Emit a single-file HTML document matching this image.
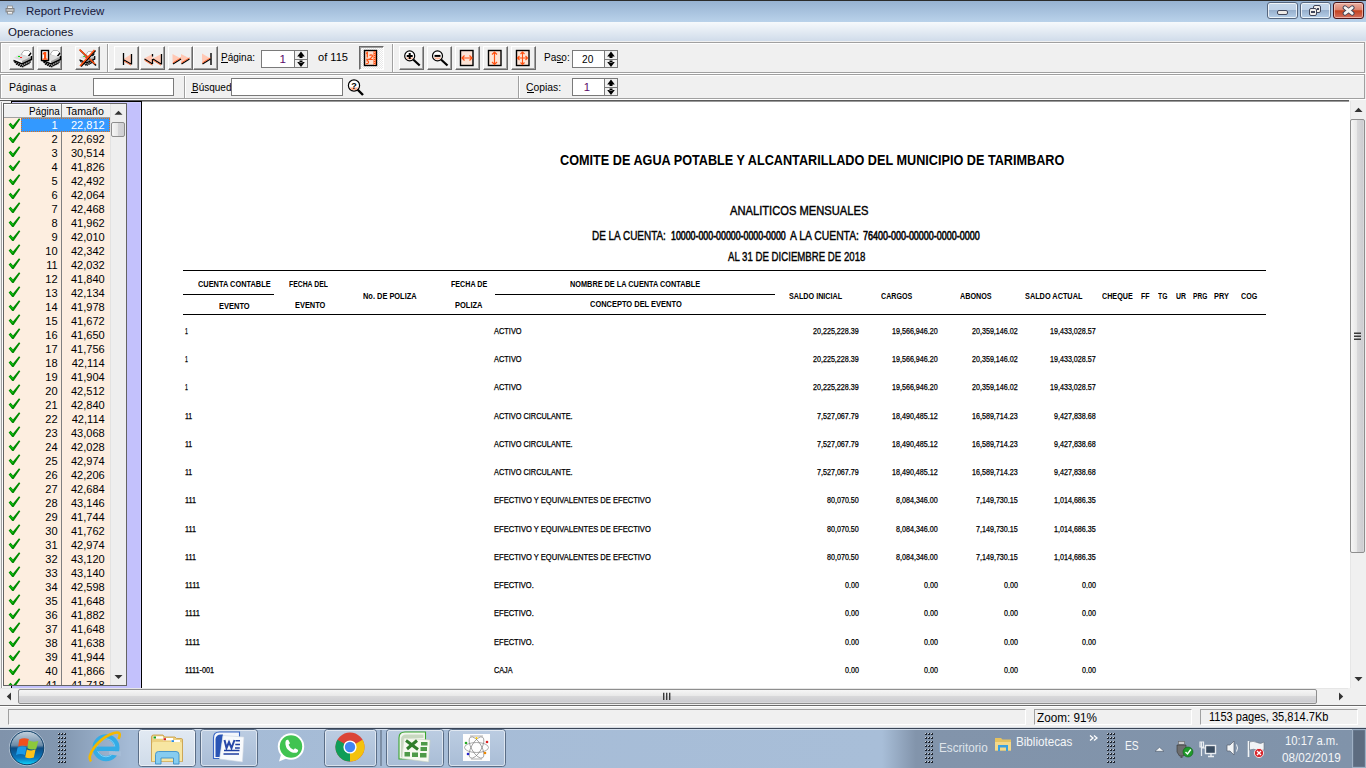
<!DOCTYPE html>
<html><head><meta charset="utf-8"><style>
*{margin:0;padding:0;box-sizing:border-box}
html,body{width:1366px;height:768px;overflow:hidden;background:#f0f0f0;font-family:"Liberation Sans",sans-serif;position:relative}
.a{position:absolute}
.t{position:absolute;white-space:nowrap;line-height:1;transform-origin:0 0}
.btn{position:absolute;top:46px;width:25px;height:24px;background:#f0f0f0;border-top:1px solid #fff;border-left:1px solid #fff;border-right:1px solid #6a6a6a;border-bottom:1px solid #6a6a6a;box-shadow:inset -1px -1px 0 #a0a0a0}
.wb{top:2px;height:17px;border:1px solid #56667e;border-radius:3px;box-shadow:inset 0 0 0 1px rgba(255,255,255,.75);background:linear-gradient(#c4d6ea 0,#bfd2e8 48%,#98b0cd 50%,#b6cfe9 100%)}
.wbc{top:2px;height:17px;border:1px solid #4a1418;border-radius:3px;box-shadow:inset 0 0 0 1px rgba(255,220,210,.6);background:linear-gradient(#eab0a2 0,#dc8470 45%,#c4421f 52%,#d47060 100%)}
.inp{position:absolute;background:#fff;border:1px solid #7a7a7a}
</style></head><body>

<div class="a" style="left:0;top:0;width:1366px;height:1px;background:#2b2b2b"></div>
<div class="a" style="left:0;top:1px;width:1366px;height:21px;background:linear-gradient(#97b2d2,#b9d2ea)"></div>
<div class="t" style="left:26.40px;top:4.75px;font-size:11.63px;font-weight:normal;color:#16163a;transform:scaleX(0.9853);">Report Preview</div>
<div class="a wb" style="left:1267px;width:31px"><div class="a" style="left:9px;top:7px;width:11px;height:5px;background:#eeeae6;border:1px solid #41465a;border-radius:2px"></div></div>
<div class="a wb" style="left:1300px;width:31px"><div class="a" style="left:12px;top:2px;width:8px;height:8px;background:#f2efec;border:1.5px solid #41465a;border-radius:2px"><div class="a" style="left:3px;top:2px;width:2px;height:2px;border:1px solid #41465a"></div></div><div class="a" style="left:8px;top:5px;width:8px;height:8px;background:#f2efec;border:1.5px solid #41465a;border-radius:2px"><div class="a" style="left:1px;top:2px;width:4px;height:2px;border:1px solid #41465a"></div></div></div>
<div class="a wbc" style="left:1333px;width:31px"><svg class="a" style="left:8px;top:2px" width="14" height="12" viewBox="0 0 14 12"><path d="M3 2.7 L10.2 8.3 M10.2 2.7 L3 8.3" stroke="#3e4256" stroke-width="4.6" stroke-linecap="round"/><path d="M3 2.7 L10.2 8.3 M10.2 2.7 L3 8.3" stroke="#f6f4f2" stroke-width="2.8" stroke-linecap="round"/></svg></div>
<svg class="a" style="left:5px;top:5px" width="10" height="10" viewBox="0 0 10 10"><rect x="2.5" y="1" width="5" height="2.5" fill="#f4f4f4" stroke="#8a8a8a" stroke-width="0.8"/><rect x="1" y="3.5" width="8" height="3.5" fill="#bdbdbd" stroke="#7a7a7a" stroke-width="0.8"/><rect x="2.5" y="6.5" width="5" height="2.5" fill="#f4f4f4" stroke="#8a8a8a" stroke-width="0.8"/></svg>
<div class="a" style="left:0;top:22px;width:1366px;height:19px;background:linear-gradient(#f6f9fc,#d0dcea)"></div>
<div class="t" style="left:7.60px;top:25.95px;font-size:11.63px;font-weight:normal;color:#10102a;transform:scaleX(0.9890);">Operaciones</div>
<div class="a" style="left:0;top:41px;width:1366px;height:1px;background:#f0f0f0"></div>
<div class="a" style="left:0;top:42px;width:1365px;height:31px;border:1px solid #a0a0a0;box-shadow:inset 1px 1px 0 #fff;background:#f0f0f0"></div>
<div class="a" style="left:0;top:73px;width:1366px;height:1px;background:#fff"></div>
<div class="btn" style="left:9px"></div>
<div class="btn" style="left:37px"></div>
<div class="btn" style="left:75px"></div>
<div class="btn" style="left:114px"></div>
<div class="btn" style="left:140px"></div>
<div class="btn" style="left:168px"></div>
<div class="btn" style="left:193px"></div>
<div class="btn" style="left:399px"></div>
<div class="btn" style="left:427px"></div>
<div class="btn" style="left:455px"></div>
<div class="btn" style="left:483px"></div>
<div class="btn" style="left:511px"></div>
<div class="btn" style="left:359px;width:25px;border-top:1px solid #6a6a6a;border-left:1px solid #6a6a6a;border-right:1px solid #fff;border-bottom:1px solid #fff;box-shadow:inset 1px 1px 0 #a0a0a0;background-color:#fff;background-image:conic-gradient(#fff 25%,#e8e8e8 0 50%,#fff 0 75%,#e8e8e8 0);background-size:2px 2px"></div>
<div class="a" style="left:107px;top:44px;width:1px;height:28px;background:#a0a0a0"></div>
<div class="a" style="left:108px;top:44px;width:1px;height:28px;background:#fff"></div>
<div class="a" style="left:392px;top:44px;width:1px;height:28px;background:#a0a0a0"></div>
<div class="a" style="left:393px;top:44px;width:1px;height:28px;background:#fff"></div>
<div class="t" style="left:221.00px;top:51.15px;font-size:11.63px;font-weight:normal;color:#000;transform:scaleX(0.8621);">Página:</div>
<div class="a" style="left:221px;top:62px;width:7px;height:1px;background:#000"></div>
<div class="inp" style="left:261px;top:50px;width:47px;height:18px"></div>
<div class="a" style="left:294px;top:50px;width:14px;height:18px;border:1px solid #7a7a7a;background:#f0f0f0"></div><div class="a" style="left:294px;top:59px;width:14px;height:1px;background:#7a7a7a"></div><svg class="a" style="left:294px;top:50px" width="14" height="18"><path d="M3.2 6.5 L7.0 1.5 L10.8 6.5Z M5.5 6 H8.5 V8 H5.5Z M3.2 12 L7.0 17 L10.8 12Z M5.5 10.5 H8.5 V12.5 H5.5Z" fill="#000"/></svg>
<div class="t" style="left:279.53px;top:53.15px;font-size:11.63px;font-weight:normal;color:#5a0a6a;">1</div>
<div class="t" style="left:317.50px;top:51.15px;font-size:11.63px;font-weight:normal;color:#000;transform:scaleX(0.9533);">of 115</div>
<div class="t" style="left:544.40px;top:52.20px;font-size:11.34px;font-weight:normal;color:#000;transform:scaleX(0.8872);">Paso:</div>
<div class="a" style="left:557px;top:62px;width:6px;height:1px;background:#000"></div>
<div class="inp" style="left:572px;top:50px;width:46px;height:18px"></div>
<div class="a" style="left:604px;top:50px;width:14px;height:18px;border:1px solid #7a7a7a;background:#f0f0f0"></div><div class="a" style="left:604px;top:59px;width:14px;height:1px;background:#7a7a7a"></div><svg class="a" style="left:604px;top:50px" width="14" height="18"><path d="M3.2 6.5 L7.0 1.5 L10.8 6.5Z M5.5 6 H8.5 V8 H5.5Z M3.2 12 L7.0 17 L10.8 12Z M5.5 10.5 H8.5 V12.5 H5.5Z" fill="#000"/></svg>
<div class="t" style="left:582.00px;top:53.15px;font-size:11.63px;font-weight:normal;color:#000;transform:scaleX(0.8734);">20</div>
<svg class="a" style="left:0;top:0" width="1366" height="100"><g transform="translate(13,50)">
<path d="M8 4.5 L11 0.5 L15.5 0.5 L18 3 L14.5 7 Z" fill="#fff" stroke="#9a9a9a" stroke-width="0.8"/>
<path d="M18 3 L14.5 7.5" stroke="#000" stroke-width="1.3"/>
<path d="M0.5 8 L6 4.5 L18.5 6.5 L9 11 Z" fill="#dcdcdc"/>
<path d="M0.5 8 L9 11 L9 14 L0.5 11 Z" fill="#f2f2f2"/>
<path d="M9 11 L18.5 6.5 L18.5 10 L9 14 Z" fill="#a4a4a4"/>
<path d="M0.5 10.5 L9 14 L18.5 9.5 L18.5 6" fill="none" stroke="#000" stroke-width="1.4"/>
<path d="M1.5 12.2 L9 15.6 L18 11.6" fill="none" stroke="#000" stroke-width="1.4" stroke-dasharray="1.6 0.7"/>
<path d="M3 13.8 L9 17 L16.5 13.3" fill="none" stroke="#000" stroke-width="1.4" stroke-dasharray="1.6 0.7"/>
<rect x="5" y="6" width="2" height="1" fill="#00e000"/><rect x="7" y="7" width="2" height="1" fill="#ff2020"/>
</g><g transform="translate(42,50)">
<path d="M8 4.5 L11 0.5 L15.5 0.5 L18 3 L14.5 7 Z" fill="#fff" stroke="#9a9a9a" stroke-width="0.8"/>
<path d="M18 3 L14.5 7.5" stroke="#000" stroke-width="1.3"/>
<path d="M0.5 8 L6 4.5 L18.5 6.5 L9 11 Z" fill="#dcdcdc"/>
<path d="M0.5 8 L9 11 L9 14 L0.5 11 Z" fill="#f2f2f2"/>
<path d="M9 11 L18.5 6.5 L18.5 10 L9 14 Z" fill="#a4a4a4"/>
<path d="M0.5 10.5 L9 14 L18.5 9.5 L18.5 6" fill="none" stroke="#000" stroke-width="1.4"/>
<path d="M1.5 12.2 L9 15.6 L18 11.6" fill="none" stroke="#000" stroke-width="1.4" stroke-dasharray="1.6 0.7"/>
<path d="M3 13.8 L9 17 L16.5 13.3" fill="none" stroke="#000" stroke-width="1.4" stroke-dasharray="1.6 0.7"/>

</g><rect x="41.5" y="50.5" width="7" height="10" fill="#fff" stroke="#000" stroke-width="1.4"/><path d="M44 52 H46.3 V58.5 H47.5 V59.8 H42.5 V58.5 H44 V54.2 L42.8 54.8 V53.3Z" fill="#ff5010"/><g transform="translate(79,51) scale(0.85)"><g transform="translate(0,0)">
<path d="M8 4.5 L11 0.5 L15.5 0.5 L18 3 L14.5 7 Z" fill="#fff" stroke="#9a9a9a" stroke-width="0.8"/>
<path d="M18 3 L14.5 7.5" stroke="#000" stroke-width="1.3"/>
<path d="M0.5 8 L6 4.5 L18.5 6.5 L9 11 Z" fill="#dcdcdc"/>
<path d="M0.5 8 L9 11 L9 14 L0.5 11 Z" fill="#f2f2f2"/>
<path d="M9 11 L18.5 6.5 L18.5 10 L9 14 Z" fill="#a4a4a4"/>
<path d="M0.5 10.5 L9 14 L18.5 9.5 L18.5 6" fill="none" stroke="#000" stroke-width="1.4"/>
<path d="M1.5 12.2 L9 15.6 L18 11.6" fill="none" stroke="#000" stroke-width="1.4" stroke-dasharray="1.6 0.7"/>
<path d="M3 13.8 L9 17 L16.5 13.3" fill="none" stroke="#000" stroke-width="1.4" stroke-dasharray="1.6 0.7"/>
<rect x="5" y="6" width="2" height="1" fill="#00e000"/><rect x="7" y="7" width="2" height="1" fill="#ff2020"/>
</g></g><path d="M80 50 L96 65.5" stroke="#000" stroke-width="1.6"/><path d="M79.5 49.5 L95 64" stroke="#ff5010" stroke-width="1.6"/><path d="M95.5 50.5 L81 66.5" stroke="#000" stroke-width="1.6"/><path d="M94.5 50 L80 66" stroke="#ff5010" stroke-width="1.6"/><path d="M123.5 59 L131.5 54 L131.5 64 Z" fill="#ffc8b4"/><path d="M123.5 53 V65 M131.5 54 V64.5" stroke="#000" stroke-width="1.3"/><path d="M124 60 L131 64" stroke="#000" stroke-width="1.3"/><path d="M124 61.2 L131 65.2" stroke="#ff5010" stroke-width="0.8"/><path d="M144 58.5 L152.5 54 L152.5 64 Z M152.5 58.5 L161.5 54 L161.5 64 Z" fill="#ffc8b4"/><path d="M161.5 54 V64.5 M152.5 54 V56.5 M152.5 59 V64" stroke="#000" stroke-width="1.3"/><path d="M144.5 59 L152.5 64 M153 59 L161 64" stroke="#000" stroke-width="1.3"/><path d="M144.5 60.2 L152.5 65.2 M153 60.2 L161 65.2" stroke="#ff5010" stroke-width="0.8"/><path d="M172.5 54 L181 58.5 L172.5 64 Z M181 54 L190 58.5 L181 64 Z" fill="#ffc8b4"/><path d="M173 64 L181 59 M181.5 64 L189.5 59" stroke="#000" stroke-width="1.3"/><path d="M173 62.8 L181 57.8 M181.5 62.8 L189.5 57.8" stroke="#ff5010" stroke-width="0.8"/><path d="M202 53.5 L210.5 58.5 L202 64 Z" fill="#ffc8b4"/><path d="M211 53 V65" stroke="#000" stroke-width="1.4"/><path d="M202.5 64 L210.5 59" stroke="#000" stroke-width="1.3"/><path d="M202.5 62.8 L210.5 57.8" stroke="#ff5010" stroke-width="0.8"/><rect x="364.5" y="50.5" width="12" height="15" fill="#fde0d0" stroke="#000" stroke-width="1.4"/><rect x="373.5" y="51.2" width="2.3" height="13.6" fill="#ff5010"/><path d="M374.6 52 V65" stroke="#ffd0b8" stroke-width="0.8" stroke-dasharray="1 1"/><path d="M366 53.5 L367.3 52.5 V57.5" fill="none" stroke="#ff5010" stroke-width="1.3"/><path d="M369.5 55.5 Q371 54.3 372.3 55.3 Q373 56.5 371 58 L369.5 59.5 H372.8" fill="none" stroke="#ff5010" stroke-width="1.2"/><path d="M366 59.3 H368.3 L367 60.8 Q368.8 61 368.5 62.6 Q367.8 64.2 365.8 63.6" fill="none" stroke="#ff5010" stroke-width="1.1"/><path d="M413.2 59.5 L419.7 65.5" stroke="#000" stroke-width="2.2"/><circle cx="409.7" cy="55.9" r="5" fill="#fff" stroke="#000" stroke-width="1.2"/><path d="M405.7 57.5 A5 5 0 0 0 413.7 57.5" fill="#ffb090"/><path d="M406.7 55.9 H412.7 M409.7 52.9 V58.9" stroke="#000" stroke-width="2"/><path d="M441.0 59.5 L447.5 65.5" stroke="#000" stroke-width="2.2"/><circle cx="437.5" cy="55.9" r="5" fill="#fff" stroke="#000" stroke-width="1.2"/><path d="M433.5 57.5 A5 5 0 0 0 441.5 57.5" fill="#ffb090"/><path d="M434.5 55.9 H440.5" stroke="#000" stroke-width="2"/><rect x="460.5" y="50.5" width="12.5" height="15" fill="#fde4d6" stroke="#000" stroke-width="1.4"/><rect x="488.5" y="50.5" width="12.5" height="15" fill="#fde4d6" stroke="#000" stroke-width="1.4"/><rect x="516.5" y="50.5" width="12.5" height="15" fill="#fde4d6" stroke="#000" stroke-width="1.4"/><path d="M462 58 H472 M464.5 55.5 L462 58 L464.5 60.5 M469.5 55.5 L472 58 L469.5 60.5" stroke="#ff5010" stroke-width="1.2" fill="none"/><path d="M494.5 52 V64.5 M492 54.5 L494.5 52 L497 54.5 M492 62 L494.5 64.5 L497 62" stroke="#ff5010" stroke-width="1.2" fill="none"/><path d="M522.5 52 V64.5 M517.5 58 H527.5 M520.5 54 L522.5 52 L524.5 54 M520.5 62.5 L522.5 64.5 L524.5 62.5 M519.5 56 L517.5 58 L519.5 60 M525.5 56 L527.5 58 L525.5 60" stroke="#ff5010" stroke-width="1.1" fill="none"/></svg>
<div class="a" style="left:0;top:74px;width:1365px;height:25px;border:1px solid #a0a0a0;box-shadow:inset 1px 1px 0 #fff;background:#f0f0f0"></div>
<div class="a" style="left:0;top:99px;width:1366px;height:1px;background:#fff"></div>
<div class="t" style="left:9.00px;top:82.27px;font-size:10.90px;font-weight:normal;color:#000;transform:scaleX(0.9700);">Páginas a</div>
<div class="inp" style="left:93px;top:78px;width:81px;height:18px"></div>
<div class="a" style="left:184px;top:76px;width:1px;height:22px;background:#a0a0a0"></div>
<div class="a" style="left:185px;top:76px;width:1px;height:22px;background:#fff"></div>
<div class="a" style="left:518px;top:76px;width:1px;height:22px;background:#a0a0a0"></div>
<div class="a" style="left:519px;top:76px;width:1px;height:22px;background:#fff"></div>
<div class="t" style="left:191.50px;top:82.27px;font-size:10.90px;font-weight:normal;color:#000;transform:scaleX(0.9186);">Búsqued</div>
<div class="a" style="left:191px;top:92px;width:7px;height:1px;background:#000"></div>
<div class="inp" style="left:231px;top:78px;width:112px;height:18px"></div>
<div class="t" style="left:526.30px;top:82.27px;font-size:10.90px;font-weight:normal;color:#000;transform:scaleX(0.9503);">Copias:</div>
<div class="a" style="left:527px;top:92px;width:7px;height:1px;background:#000"></div>
<div class="inp" style="left:572px;top:78px;width:46px;height:18px"></div>
<div class="a" style="left:604px;top:78px;width:14px;height:18px;border:1px solid #7a7a7a;background:#f0f0f0"></div><div class="a" style="left:604px;top:87px;width:14px;height:1px;background:#7a7a7a"></div><svg class="a" style="left:604px;top:78px" width="14" height="18"><path d="M3.2 6.5 L7.0 1.5 L10.8 6.5Z M5.5 6 H8.5 V8 H5.5Z M3.2 12 L7.0 17 L10.8 12Z M5.5 10.5 H8.5 V12.5 H5.5Z" fill="#000"/></svg>
<div class="t" style="left:583.69px;top:81.60px;font-size:11.34px;font-weight:normal;color:#5a0a6a;">1</div>
<svg class="a" style="left:347px;top:78px" width="18" height="18"><path d="M10 11 L16 17" stroke="#000" stroke-width="2.4"/><circle cx="7" cy="7.5" r="5.6" fill="#fff" stroke="#000" stroke-width="1.2"/><path d="M2.5 9.5 A5 5 0 0 0 11.5 9.5" fill="#ffb090"/><text x="7" y="11" font-size="9" font-weight="bold" text-anchor="middle" fill="#000" font-family="Liberation Sans">?</text></svg>
<div class="a" style="left:0;top:100px;width:1349px;height:1px;background:#5a5a5a"></div>
<div class="a" style="left:142px;top:101px;width:1207px;height:1px;background:#9a9a9a"></div>
<div class="a" style="left:1px;top:102px;width:1px;height:586px;background:#a0a0a0"></div>
<div class="a" style="left:2px;top:102px;width:1px;height:586px;background:#fff"></div>
<div class="a" style="left:11px;top:101px;width:131px;height:1px;background:#000"></div>
<div class="a" style="left:142px;top:102px;width:1208px;height:586px;background:#fff"></div>
<div class="a" style="left:12px;top:102px;width:129px;height:586px;background:#c3c1fc;border-top:1px solid #cfcdfd;border-right:1px solid #cfcdfd"></div>
<div class="a" style="left:141px;top:101px;width:1px;height:587px;background:#000"></div>
<div class="a" style="left:11px;top:101px;width:1px;height:587px;background:#000"></div>
<div class="a" style="left:3px;top:103px;width:124px;height:583px;background:#fdeee0;border:1px solid #646464;overflow:hidden">
<div class="a" style="left:0;top:0;width:106px;height:14px;background:#f0f0f0;border-top:1px solid #fff;border-bottom:1px solid #a0a0a0"></div>
<div class="a" style="left:57px;top:0;width:1px;height:600px;background:#808080"></div>
<div class="a" style="left:106px;top:0;width:16px;height:581px;background:#eeeeee;border-left:1px solid #e2e2e2"></div>
<div class="a" style="left:17px;top:14px;width:89px;height:14px;background:#3399ff"></div>
<div class="a" style="left:17px;top:14px;width:89px;height:14px;border:1px dotted #e07018"></div>
<div class="a" style="left:107px;top:18px;width:14px;height:15px;border:1px solid #8e8e8e;border-radius:2px;background:linear-gradient(90deg,#f6f6f6,#e6e6e6 50%,#d4d4d6 52%,#cfcfd2)"></div>
</div>
<svg class="a" style="left:0;top:100px" width="130" height="585"><path d="M114.5 14.8 L118.5 10.8 L122.5 14.8Z" fill="#333"/><path d="M114.5 575 L118.5 579 L122.5 575Z" fill="#333"/>
<path d="M8.6 24.6 L10.6 22.8 L13 25.4 L19 18.2 L20.3 19.2 L13.6 29 L12.2 29Z" fill="#008c00"/><path d="M10 24.2 L12.8 27" stroke="#10e010" stroke-width="1"/>
<path d="M8.6 38.6 L10.6 36.8 L13 39.4 L19 32.2 L20.3 33.2 L13.6 43 L12.2 43Z" fill="#008c00"/><path d="M10 38.2 L12.8 41" stroke="#10e010" stroke-width="1"/>
<path d="M8.6 52.6 L10.6 50.8 L13 53.4 L19 46.2 L20.3 47.2 L13.6 57 L12.2 57Z" fill="#008c00"/><path d="M10 52.2 L12.8 55" stroke="#10e010" stroke-width="1"/>
<path d="M8.6 66.6 L10.6 64.8 L13 67.4 L19 60.2 L20.3 61.2 L13.6 71 L12.2 71Z" fill="#008c00"/><path d="M10 66.2 L12.8 69" stroke="#10e010" stroke-width="1"/>
<path d="M8.6 80.6 L10.6 78.8 L13 81.4 L19 74.2 L20.3 75.2 L13.6 85 L12.2 85Z" fill="#008c00"/><path d="M10 80.2 L12.8 83" stroke="#10e010" stroke-width="1"/>
<path d="M8.6 94.6 L10.6 92.8 L13 95.4 L19 88.2 L20.3 89.2 L13.6 99 L12.2 99Z" fill="#008c00"/><path d="M10 94.2 L12.8 97" stroke="#10e010" stroke-width="1"/>
<path d="M8.6 108.6 L10.6 106.8 L13 109.4 L19 102.2 L20.3 103.2 L13.6 113 L12.2 113Z" fill="#008c00"/><path d="M10 108.2 L12.8 111" stroke="#10e010" stroke-width="1"/>
<path d="M8.6 122.6 L10.6 120.8 L13 123.4 L19 116.2 L20.3 117.2 L13.6 127 L12.2 127Z" fill="#008c00"/><path d="M10 122.2 L12.8 125" stroke="#10e010" stroke-width="1"/>
<path d="M8.6 136.6 L10.6 134.8 L13 137.4 L19 130.2 L20.3 131.2 L13.6 141 L12.2 141Z" fill="#008c00"/><path d="M10 136.2 L12.8 139" stroke="#10e010" stroke-width="1"/>
<path d="M8.6 150.6 L10.6 148.8 L13 151.4 L19 144.2 L20.3 145.2 L13.6 155 L12.2 155Z" fill="#008c00"/><path d="M10 150.2 L12.8 153" stroke="#10e010" stroke-width="1"/>
<path d="M8.6 164.6 L10.6 162.8 L13 165.4 L19 158.2 L20.3 159.2 L13.6 169 L12.2 169Z" fill="#008c00"/><path d="M10 164.2 L12.8 167" stroke="#10e010" stroke-width="1"/>
<path d="M8.6 178.6 L10.6 176.8 L13 179.4 L19 172.2 L20.3 173.2 L13.6 183 L12.2 183Z" fill="#008c00"/><path d="M10 178.2 L12.8 181" stroke="#10e010" stroke-width="1"/>
<path d="M8.6 192.6 L10.6 190.8 L13 193.4 L19 186.2 L20.3 187.2 L13.6 197 L12.2 197Z" fill="#008c00"/><path d="M10 192.2 L12.8 195" stroke="#10e010" stroke-width="1"/>
<path d="M8.6 206.6 L10.6 204.8 L13 207.4 L19 200.2 L20.3 201.2 L13.6 211 L12.2 211Z" fill="#008c00"/><path d="M10 206.2 L12.8 209" stroke="#10e010" stroke-width="1"/>
<path d="M8.6 220.6 L10.6 218.8 L13 221.4 L19 214.2 L20.3 215.2 L13.6 225 L12.2 225Z" fill="#008c00"/><path d="M10 220.2 L12.8 223" stroke="#10e010" stroke-width="1"/>
<path d="M8.6 234.6 L10.6 232.8 L13 235.4 L19 228.2 L20.3 229.2 L13.6 239 L12.2 239Z" fill="#008c00"/><path d="M10 234.2 L12.8 237" stroke="#10e010" stroke-width="1"/>
<path d="M8.6 248.6 L10.6 246.8 L13 249.4 L19 242.2 L20.3 243.2 L13.6 253 L12.2 253Z" fill="#008c00"/><path d="M10 248.2 L12.8 251" stroke="#10e010" stroke-width="1"/>
<path d="M8.6 262.6 L10.6 260.8 L13 263.4 L19 256.2 L20.3 257.2 L13.6 267 L12.2 267Z" fill="#008c00"/><path d="M10 262.2 L12.8 265" stroke="#10e010" stroke-width="1"/>
<path d="M8.6 276.6 L10.6 274.8 L13 277.4 L19 270.2 L20.3 271.2 L13.6 281 L12.2 281Z" fill="#008c00"/><path d="M10 276.2 L12.8 279" stroke="#10e010" stroke-width="1"/>
<path d="M8.6 290.6 L10.6 288.8 L13 291.4 L19 284.2 L20.3 285.2 L13.6 295 L12.2 295Z" fill="#008c00"/><path d="M10 290.2 L12.8 293" stroke="#10e010" stroke-width="1"/>
<path d="M8.6 304.6 L10.6 302.8 L13 305.4 L19 298.2 L20.3 299.2 L13.6 309 L12.2 309Z" fill="#008c00"/><path d="M10 304.2 L12.8 307" stroke="#10e010" stroke-width="1"/>
<path d="M8.6 318.6 L10.6 316.8 L13 319.4 L19 312.2 L20.3 313.2 L13.6 323 L12.2 323Z" fill="#008c00"/><path d="M10 318.2 L12.8 321" stroke="#10e010" stroke-width="1"/>
<path d="M8.6 332.6 L10.6 330.8 L13 333.4 L19 326.2 L20.3 327.2 L13.6 337 L12.2 337Z" fill="#008c00"/><path d="M10 332.2 L12.8 335" stroke="#10e010" stroke-width="1"/>
<path d="M8.6 346.6 L10.6 344.8 L13 347.4 L19 340.2 L20.3 341.2 L13.6 351 L12.2 351Z" fill="#008c00"/><path d="M10 346.2 L12.8 349" stroke="#10e010" stroke-width="1"/>
<path d="M8.6 360.6 L10.6 358.8 L13 361.4 L19 354.2 L20.3 355.2 L13.6 365 L12.2 365Z" fill="#008c00"/><path d="M10 360.2 L12.8 363" stroke="#10e010" stroke-width="1"/>
<path d="M8.6 374.6 L10.6 372.8 L13 375.4 L19 368.2 L20.3 369.2 L13.6 379 L12.2 379Z" fill="#008c00"/><path d="M10 374.2 L12.8 377" stroke="#10e010" stroke-width="1"/>
<path d="M8.6 388.6 L10.6 386.8 L13 389.4 L19 382.2 L20.3 383.2 L13.6 393 L12.2 393Z" fill="#008c00"/><path d="M10 388.2 L12.8 391" stroke="#10e010" stroke-width="1"/>
<path d="M8.6 402.6 L10.6 400.8 L13 403.4 L19 396.2 L20.3 397.2 L13.6 407 L12.2 407Z" fill="#008c00"/><path d="M10 402.2 L12.8 405" stroke="#10e010" stroke-width="1"/>
<path d="M8.6 416.6 L10.6 414.8 L13 417.4 L19 410.2 L20.3 411.2 L13.6 421 L12.2 421Z" fill="#008c00"/><path d="M10 416.2 L12.8 419" stroke="#10e010" stroke-width="1"/>
<path d="M8.6 430.6 L10.6 428.8 L13 431.4 L19 424.2 L20.3 425.2 L13.6 435 L12.2 435Z" fill="#008c00"/><path d="M10 430.2 L12.8 433" stroke="#10e010" stroke-width="1"/>
<path d="M8.6 444.6 L10.6 442.8 L13 445.4 L19 438.2 L20.3 439.2 L13.6 449 L12.2 449Z" fill="#008c00"/><path d="M10 444.2 L12.8 447" stroke="#10e010" stroke-width="1"/>
<path d="M8.6 458.6 L10.6 456.8 L13 459.4 L19 452.2 L20.3 453.2 L13.6 463 L12.2 463Z" fill="#008c00"/><path d="M10 458.2 L12.8 461" stroke="#10e010" stroke-width="1"/>
<path d="M8.6 472.6 L10.6 470.8 L13 473.4 L19 466.2 L20.3 467.2 L13.6 477 L12.2 477Z" fill="#008c00"/><path d="M10 472.2 L12.8 475" stroke="#10e010" stroke-width="1"/>
<path d="M8.6 486.6 L10.6 484.8 L13 487.4 L19 480.2 L20.3 481.2 L13.6 491 L12.2 491Z" fill="#008c00"/><path d="M10 486.2 L12.8 489" stroke="#10e010" stroke-width="1"/>
<path d="M8.6 500.6 L10.6 498.8 L13 501.4 L19 494.2 L20.3 495.2 L13.6 505 L12.2 505Z" fill="#008c00"/><path d="M10 500.2 L12.8 503" stroke="#10e010" stroke-width="1"/>
<path d="M8.6 514.6 L10.6 512.8 L13 515.4 L19 508.2 L20.3 509.2 L13.6 519 L12.2 519Z" fill="#008c00"/><path d="M10 514.2 L12.8 517" stroke="#10e010" stroke-width="1"/>
<path d="M8.6 528.6 L10.6 526.8 L13 529.4 L19 522.2 L20.3 523.2 L13.6 533 L12.2 533Z" fill="#008c00"/><path d="M10 528.2 L12.8 531" stroke="#10e010" stroke-width="1"/>
<path d="M8.6 542.6 L10.6 540.8 L13 543.4 L19 536.2 L20.3 537.2 L13.6 547 L12.2 547Z" fill="#008c00"/><path d="M10 542.2 L12.8 545" stroke="#10e010" stroke-width="1"/>
<path d="M8.6 556.6 L10.6 554.8 L13 557.4 L19 550.2 L20.3 551.2 L13.6 561 L12.2 561Z" fill="#008c00"/><path d="M10 556.2 L12.8 559" stroke="#10e010" stroke-width="1"/>
<path d="M8.6 570.6 L10.6 568.8 L13 571.4 L19 564.2 L20.3 565.2 L13.6 575 L12.2 575Z" fill="#008c00"/><path d="M10 570.2 L12.8 573" stroke="#10e010" stroke-width="1"/>
<path d="M8.6 584.6 L10.6 582.8 L13 585.4 L19 578.2 L20.3 579.2 L13.6 589 L12.2 589Z" fill="#008c00"/><path d="M10 584.2 L12.8 587" stroke="#10e010" stroke-width="1"/>
<rect x="0" y="586" width="130" height="4" fill="none"/></svg>
<div class="a" style="left:4px;top:103px;width:106px;height:582px;overflow:hidden">
<div class="t" style="left:24.50px;top:3.29px;font-size:10.76px;font-weight:normal;color:#000;transform:scaleX(0.9168);">Página</div>
<div class="t" style="left:61.70px;top:3.29px;font-size:10.76px;font-weight:normal;color:#000;transform:scaleX(0.9882);">Tamaño</div>
<div class="t" style="left:47.44px;top:16.55px;font-size:11.05px;font-weight:normal;color:#fff;">1</div>
<div class="t" style="left:66.90px;top:16.55px;font-size:11.05px;font-weight:normal;color:#fff;">22,812</div>
<div class="t" style="left:47.44px;top:30.55px;font-size:11.05px;font-weight:normal;color:#000;">2</div>
<div class="t" style="left:66.90px;top:30.55px;font-size:11.05px;font-weight:normal;color:#000;">22,692</div>
<div class="t" style="left:47.44px;top:44.55px;font-size:11.05px;font-weight:normal;color:#000;">3</div>
<div class="t" style="left:66.90px;top:44.55px;font-size:11.05px;font-weight:normal;color:#000;">30,514</div>
<div class="t" style="left:47.44px;top:58.55px;font-size:11.05px;font-weight:normal;color:#000;">4</div>
<div class="t" style="left:66.90px;top:58.55px;font-size:11.05px;font-weight:normal;color:#000;">41,826</div>
<div class="t" style="left:47.44px;top:72.55px;font-size:11.05px;font-weight:normal;color:#000;">5</div>
<div class="t" style="left:66.90px;top:72.55px;font-size:11.05px;font-weight:normal;color:#000;">42,492</div>
<div class="t" style="left:47.44px;top:86.55px;font-size:11.05px;font-weight:normal;color:#000;">6</div>
<div class="t" style="left:66.90px;top:86.55px;font-size:11.05px;font-weight:normal;color:#000;">42,064</div>
<div class="t" style="left:47.44px;top:100.55px;font-size:11.05px;font-weight:normal;color:#000;">7</div>
<div class="t" style="left:66.90px;top:100.55px;font-size:11.05px;font-weight:normal;color:#000;">42,468</div>
<div class="t" style="left:47.44px;top:114.55px;font-size:11.05px;font-weight:normal;color:#000;">8</div>
<div class="t" style="left:66.90px;top:114.55px;font-size:11.05px;font-weight:normal;color:#000;">41,962</div>
<div class="t" style="left:47.44px;top:128.55px;font-size:11.05px;font-weight:normal;color:#000;">9</div>
<div class="t" style="left:66.90px;top:128.55px;font-size:11.05px;font-weight:normal;color:#000;">42,010</div>
<div class="t" style="left:41.30px;top:142.55px;font-size:11.05px;font-weight:normal;color:#000;">10</div>
<div class="t" style="left:66.90px;top:142.55px;font-size:11.05px;font-weight:normal;color:#000;">42,342</div>
<div class="t" style="left:42.13px;top:156.55px;font-size:11.05px;font-weight:normal;color:#000;">11</div>
<div class="t" style="left:66.90px;top:156.55px;font-size:11.05px;font-weight:normal;color:#000;">42,032</div>
<div class="t" style="left:41.30px;top:170.55px;font-size:11.05px;font-weight:normal;color:#000;">12</div>
<div class="t" style="left:66.90px;top:170.55px;font-size:11.05px;font-weight:normal;color:#000;">41,840</div>
<div class="t" style="left:41.30px;top:184.55px;font-size:11.05px;font-weight:normal;color:#000;">13</div>
<div class="t" style="left:66.90px;top:184.55px;font-size:11.05px;font-weight:normal;color:#000;">42,134</div>
<div class="t" style="left:41.30px;top:198.55px;font-size:11.05px;font-weight:normal;color:#000;">14</div>
<div class="t" style="left:66.90px;top:198.55px;font-size:11.05px;font-weight:normal;color:#000;">41,978</div>
<div class="t" style="left:41.30px;top:212.55px;font-size:11.05px;font-weight:normal;color:#000;">15</div>
<div class="t" style="left:66.90px;top:212.55px;font-size:11.05px;font-weight:normal;color:#000;">41,672</div>
<div class="t" style="left:41.30px;top:226.55px;font-size:11.05px;font-weight:normal;color:#000;">16</div>
<div class="t" style="left:66.90px;top:226.55px;font-size:11.05px;font-weight:normal;color:#000;">41,650</div>
<div class="t" style="left:41.30px;top:240.55px;font-size:11.05px;font-weight:normal;color:#000;">17</div>
<div class="t" style="left:66.90px;top:240.55px;font-size:11.05px;font-weight:normal;color:#000;">41,756</div>
<div class="t" style="left:41.30px;top:254.55px;font-size:11.05px;font-weight:normal;color:#000;">18</div>
<div class="t" style="left:67.73px;top:254.55px;font-size:11.05px;font-weight:normal;color:#000;">42,114</div>
<div class="t" style="left:41.30px;top:268.55px;font-size:11.05px;font-weight:normal;color:#000;">19</div>
<div class="t" style="left:66.90px;top:268.55px;font-size:11.05px;font-weight:normal;color:#000;">41,904</div>
<div class="t" style="left:41.30px;top:282.55px;font-size:11.05px;font-weight:normal;color:#000;">20</div>
<div class="t" style="left:66.90px;top:282.55px;font-size:11.05px;font-weight:normal;color:#000;">42,512</div>
<div class="t" style="left:41.30px;top:296.55px;font-size:11.05px;font-weight:normal;color:#000;">21</div>
<div class="t" style="left:66.90px;top:296.55px;font-size:11.05px;font-weight:normal;color:#000;">42,840</div>
<div class="t" style="left:41.30px;top:310.55px;font-size:11.05px;font-weight:normal;color:#000;">22</div>
<div class="t" style="left:67.73px;top:310.55px;font-size:11.05px;font-weight:normal;color:#000;">42,114</div>
<div class="t" style="left:41.30px;top:324.55px;font-size:11.05px;font-weight:normal;color:#000;">23</div>
<div class="t" style="left:66.90px;top:324.55px;font-size:11.05px;font-weight:normal;color:#000;">43,068</div>
<div class="t" style="left:41.30px;top:338.55px;font-size:11.05px;font-weight:normal;color:#000;">24</div>
<div class="t" style="left:66.90px;top:338.55px;font-size:11.05px;font-weight:normal;color:#000;">42,028</div>
<div class="t" style="left:41.30px;top:352.55px;font-size:11.05px;font-weight:normal;color:#000;">25</div>
<div class="t" style="left:66.90px;top:352.55px;font-size:11.05px;font-weight:normal;color:#000;">42,974</div>
<div class="t" style="left:41.30px;top:366.55px;font-size:11.05px;font-weight:normal;color:#000;">26</div>
<div class="t" style="left:66.90px;top:366.55px;font-size:11.05px;font-weight:normal;color:#000;">42,206</div>
<div class="t" style="left:41.30px;top:380.55px;font-size:11.05px;font-weight:normal;color:#000;">27</div>
<div class="t" style="left:66.90px;top:380.55px;font-size:11.05px;font-weight:normal;color:#000;">42,684</div>
<div class="t" style="left:41.30px;top:394.55px;font-size:11.05px;font-weight:normal;color:#000;">28</div>
<div class="t" style="left:66.90px;top:394.55px;font-size:11.05px;font-weight:normal;color:#000;">43,146</div>
<div class="t" style="left:41.30px;top:408.55px;font-size:11.05px;font-weight:normal;color:#000;">29</div>
<div class="t" style="left:66.90px;top:408.55px;font-size:11.05px;font-weight:normal;color:#000;">41,744</div>
<div class="t" style="left:41.30px;top:422.55px;font-size:11.05px;font-weight:normal;color:#000;">30</div>
<div class="t" style="left:66.90px;top:422.55px;font-size:11.05px;font-weight:normal;color:#000;">41,762</div>
<div class="t" style="left:41.30px;top:436.55px;font-size:11.05px;font-weight:normal;color:#000;">31</div>
<div class="t" style="left:66.90px;top:436.55px;font-size:11.05px;font-weight:normal;color:#000;">42,974</div>
<div class="t" style="left:41.30px;top:450.55px;font-size:11.05px;font-weight:normal;color:#000;">32</div>
<div class="t" style="left:66.90px;top:450.55px;font-size:11.05px;font-weight:normal;color:#000;">43,120</div>
<div class="t" style="left:41.30px;top:464.55px;font-size:11.05px;font-weight:normal;color:#000;">33</div>
<div class="t" style="left:66.90px;top:464.55px;font-size:11.05px;font-weight:normal;color:#000;">43,140</div>
<div class="t" style="left:41.30px;top:478.55px;font-size:11.05px;font-weight:normal;color:#000;">34</div>
<div class="t" style="left:66.90px;top:478.55px;font-size:11.05px;font-weight:normal;color:#000;">42,598</div>
<div class="t" style="left:41.30px;top:492.55px;font-size:11.05px;font-weight:normal;color:#000;">35</div>
<div class="t" style="left:66.90px;top:492.55px;font-size:11.05px;font-weight:normal;color:#000;">41,648</div>
<div class="t" style="left:41.30px;top:506.55px;font-size:11.05px;font-weight:normal;color:#000;">36</div>
<div class="t" style="left:66.90px;top:506.55px;font-size:11.05px;font-weight:normal;color:#000;">41,882</div>
<div class="t" style="left:41.30px;top:520.55px;font-size:11.05px;font-weight:normal;color:#000;">37</div>
<div class="t" style="left:66.90px;top:520.55px;font-size:11.05px;font-weight:normal;color:#000;">41,648</div>
<div class="t" style="left:41.30px;top:534.55px;font-size:11.05px;font-weight:normal;color:#000;">38</div>
<div class="t" style="left:66.90px;top:534.55px;font-size:11.05px;font-weight:normal;color:#000;">41,638</div>
<div class="t" style="left:41.30px;top:548.55px;font-size:11.05px;font-weight:normal;color:#000;">39</div>
<div class="t" style="left:66.90px;top:548.55px;font-size:11.05px;font-weight:normal;color:#000;">41,944</div>
<div class="t" style="left:41.30px;top:562.55px;font-size:11.05px;font-weight:normal;color:#000;">40</div>
<div class="t" style="left:66.90px;top:562.55px;font-size:11.05px;font-weight:normal;color:#000;">41,866</div>
<div class="t" style="left:41.30px;top:576.55px;font-size:11.05px;font-weight:normal;color:#000;">41</div>
<div class="t" style="left:66.90px;top:576.55px;font-size:11.05px;font-weight:normal;color:#000;">41,718</div>
</div>
<div class="t" style="left:559.70px;top:151.88px;font-size:15.26px;font-weight:bold;color:#000;transform:scaleX(0.8302);">COMITE DE AGUA POTABLE Y ALCANTARILLADO DEL MUNICIPIO DE TARIMBARO</div>
<div class="t" style="left:730.30px;top:205.22px;font-size:12.50px;font-weight:normal;color:#000;transform:scaleX(0.8934);-webkit-text-stroke:0.4px #000;">ANALITICOS MENSUALES</div>
<div class="t" style="left:591.60px;top:229.82px;font-size:12.50px;font-weight:normal;color:#000;transform:scaleX(0.7958);-webkit-text-stroke:0.4px #000;">DE LA CUENTA:</div>
<div class="t" style="left:671.40px;top:229.82px;font-size:12.50px;font-weight:normal;color:#000;transform:scaleX(0.7052);-webkit-text-stroke:0.6px #000;">10000-000-00000-0000-0000</div>
<div class="t" style="left:790.30px;top:229.82px;font-size:12.50px;font-weight:normal;color:#000;transform:scaleX(0.8299);-webkit-text-stroke:0.4px #000;">A LA CUENTA:</div>
<div class="t" style="left:863.00px;top:229.82px;font-size:12.50px;font-weight:normal;color:#000;transform:scaleX(0.7175);-webkit-text-stroke:0.6px #000;">76400-000-00000-0000-0000</div>
<div class="t" style="left:727.60px;top:250.82px;font-size:12.50px;font-weight:normal;color:#000;transform:scaleX(0.7715);-webkit-text-stroke:0.4px #000;">AL 31 DE DICIEMBRE DE 2018</div>
<div class="a" style="left:183px;top:270px;width:1083px;height:1px;background:#000"></div>
<div class="a" style="left:183px;top:294px;width:91px;height:1px;background:#000"></div>
<div class="a" style="left:495px;top:294px;width:280px;height:1px;background:#000"></div>
<div class="a" style="left:183px;top:314px;width:1083px;height:1px;background:#000"></div>
<div class="t" style="left:198.20px;top:279.76px;font-size:8.43px;font-weight:bold;color:#000;transform:scaleX(0.8783);">CUENTA CONTABLE</div>
<div class="t" style="left:288.90px;top:279.76px;font-size:8.43px;font-weight:bold;color:#000;transform:scaleX(0.8123);">FECHA DEL</div>
<div class="t" style="left:219.20px;top:301.86px;font-size:8.43px;font-weight:bold;color:#000;transform:scaleX(0.8903);">EVENTO</div>
<div class="t" style="left:295.40px;top:300.96px;font-size:8.43px;font-weight:bold;color:#000;transform:scaleX(0.8816);">EVENTO</div>
<div class="t" style="left:363.20px;top:291.66px;font-size:8.43px;font-weight:bold;color:#000;transform:scaleX(0.8812);">No. DE POLIZA</div>
<div class="t" style="left:450.50px;top:279.66px;font-size:8.43px;font-weight:bold;color:#000;transform:scaleX(0.8471);">FECHA DE</div>
<div class="t" style="left:455.40px;top:300.66px;font-size:8.43px;font-weight:bold;color:#000;transform:scaleX(0.8902);">POLIZA</div>
<div class="t" style="left:570.20px;top:279.66px;font-size:8.43px;font-weight:bold;color:#000;transform:scaleX(0.8696);">NOMBRE DE LA CUENTA CONTABLE</div>
<div class="t" style="left:590.00px;top:300.46px;font-size:8.43px;font-weight:bold;color:#000;transform:scaleX(0.8865);">CONCEPTO DEL EVENTO</div>
<div class="t" style="left:788.90px;top:291.66px;font-size:8.43px;font-weight:bold;color:#000;transform:scaleX(0.8532);">SALDO INICIAL</div>
<div class="t" style="left:880.70px;top:291.66px;font-size:8.43px;font-weight:bold;color:#000;transform:scaleX(0.8440);">CARGOS</div>
<div class="t" style="left:959.90px;top:291.66px;font-size:8.43px;font-weight:bold;color:#000;transform:scaleX(0.8548);">ABONOS</div>
<div class="t" style="left:1024.80px;top:291.66px;font-size:8.43px;font-weight:bold;color:#000;transform:scaleX(0.8681);">SALDO ACTUAL</div>
<div class="t" style="left:1102.10px;top:291.66px;font-size:8.43px;font-weight:bold;color:#000;transform:scaleX(0.8517);">CHEQUE</div>
<div class="t" style="left:1141.40px;top:291.66px;font-size:8.43px;font-weight:bold;color:#000;transform:scaleX(0.8352);">FF</div>
<div class="t" style="left:1158.30px;top:291.66px;font-size:8.43px;font-weight:bold;color:#000;transform:scaleX(0.8032);">TG</div>
<div class="t" style="left:1175.90px;top:291.66px;font-size:8.43px;font-weight:bold;color:#000;transform:scaleX(0.8216);">UR</div>
<div class="t" style="left:1193.40px;top:291.66px;font-size:8.43px;font-weight:bold;color:#000;transform:scaleX(0.7829);">PRG</div>
<div class="t" style="left:1214.10px;top:291.66px;font-size:8.43px;font-weight:bold;color:#000;transform:scaleX(0.8757);">PRY</div>
<div class="t" style="left:1240.90px;top:291.66px;font-size:8.43px;font-weight:bold;color:#000;transform:scaleX(0.8443);">COG</div>
<div class="t" style="left:185.30px;top:327.02px;font-size:8.72px;font-weight:normal;color:#000;transform:scaleX(0.5968);-webkit-text-stroke:0.25px #000;">1</div>
<div class="t" style="left:494.20px;top:327.02px;font-size:8.72px;font-weight:normal;color:#000;transform:scaleX(0.8500);-webkit-text-stroke:0.25px #000;">ACTIVO</div>
<div class="t" style="left:812.77px;top:327.02px;font-size:8.72px;font-weight:normal;color:#000;transform:scaleX(0.8200);-webkit-text-stroke:0.25px #000;">20,225,228.39</div>
<div class="t" style="left:892.27px;top:327.02px;font-size:8.72px;font-weight:normal;color:#000;transform:scaleX(0.8200);-webkit-text-stroke:0.25px #000;">19,566,946.20</div>
<div class="t" style="left:972.27px;top:327.02px;font-size:8.72px;font-weight:normal;color:#000;transform:scaleX(0.8200);-webkit-text-stroke:0.25px #000;">20,359,146.02</div>
<div class="t" style="left:1050.27px;top:327.02px;font-size:8.72px;font-weight:normal;color:#000;transform:scaleX(0.8200);-webkit-text-stroke:0.25px #000;">19,433,028.57</div>
<div class="t" style="left:185.30px;top:355.12px;font-size:8.72px;font-weight:normal;color:#000;transform:scaleX(0.5968);-webkit-text-stroke:0.25px #000;">1</div>
<div class="t" style="left:494.20px;top:355.12px;font-size:8.72px;font-weight:normal;color:#000;transform:scaleX(0.8500);-webkit-text-stroke:0.25px #000;">ACTIVO</div>
<div class="t" style="left:812.77px;top:355.12px;font-size:8.72px;font-weight:normal;color:#000;transform:scaleX(0.8200);-webkit-text-stroke:0.25px #000;">20,225,228.39</div>
<div class="t" style="left:892.27px;top:355.12px;font-size:8.72px;font-weight:normal;color:#000;transform:scaleX(0.8200);-webkit-text-stroke:0.25px #000;">19,566,946.20</div>
<div class="t" style="left:972.27px;top:355.12px;font-size:8.72px;font-weight:normal;color:#000;transform:scaleX(0.8200);-webkit-text-stroke:0.25px #000;">20,359,146.02</div>
<div class="t" style="left:1050.27px;top:355.12px;font-size:8.72px;font-weight:normal;color:#000;transform:scaleX(0.8200);-webkit-text-stroke:0.25px #000;">19,433,028.57</div>
<div class="t" style="left:185.30px;top:383.12px;font-size:8.72px;font-weight:normal;color:#000;transform:scaleX(0.5968);-webkit-text-stroke:0.25px #000;">1</div>
<div class="t" style="left:494.20px;top:383.12px;font-size:8.72px;font-weight:normal;color:#000;transform:scaleX(0.8500);-webkit-text-stroke:0.25px #000;">ACTIVO</div>
<div class="t" style="left:812.77px;top:383.12px;font-size:8.72px;font-weight:normal;color:#000;transform:scaleX(0.8200);-webkit-text-stroke:0.25px #000;">20,225,228.39</div>
<div class="t" style="left:892.27px;top:383.12px;font-size:8.72px;font-weight:normal;color:#000;transform:scaleX(0.8200);-webkit-text-stroke:0.25px #000;">19,566,946.20</div>
<div class="t" style="left:972.27px;top:383.12px;font-size:8.72px;font-weight:normal;color:#000;transform:scaleX(0.8200);-webkit-text-stroke:0.25px #000;">20,359,146.02</div>
<div class="t" style="left:1050.27px;top:383.12px;font-size:8.72px;font-weight:normal;color:#000;transform:scaleX(0.8200);-webkit-text-stroke:0.25px #000;">19,433,028.57</div>
<div class="t" style="left:185.30px;top:411.72px;font-size:8.72px;font-weight:normal;color:#000;transform:scaleX(0.7945);-webkit-text-stroke:0.25px #000;">11</div>
<div class="t" style="left:494.20px;top:411.72px;font-size:8.72px;font-weight:normal;color:#000;transform:scaleX(0.8450);-webkit-text-stroke:0.25px #000;">ACTIVO CIRCULANTE.</div>
<div class="t" style="left:816.74px;top:411.72px;font-size:8.72px;font-weight:normal;color:#000;transform:scaleX(0.8200);-webkit-text-stroke:0.25px #000;">7,527,067.79</div>
<div class="t" style="left:892.27px;top:411.72px;font-size:8.72px;font-weight:normal;color:#000;transform:scaleX(0.8200);-webkit-text-stroke:0.25px #000;">18,490,485.12</div>
<div class="t" style="left:972.27px;top:411.72px;font-size:8.72px;font-weight:normal;color:#000;transform:scaleX(0.8200);-webkit-text-stroke:0.25px #000;">16,589,714.23</div>
<div class="t" style="left:1054.24px;top:411.72px;font-size:8.72px;font-weight:normal;color:#000;transform:scaleX(0.8200);-webkit-text-stroke:0.25px #000;">9,427,838.68</div>
<div class="t" style="left:185.30px;top:440.02px;font-size:8.72px;font-weight:normal;color:#000;transform:scaleX(0.7945);-webkit-text-stroke:0.25px #000;">11</div>
<div class="t" style="left:494.20px;top:440.02px;font-size:8.72px;font-weight:normal;color:#000;transform:scaleX(0.8450);-webkit-text-stroke:0.25px #000;">ACTIVO CIRCULANTE.</div>
<div class="t" style="left:816.74px;top:440.02px;font-size:8.72px;font-weight:normal;color:#000;transform:scaleX(0.8200);-webkit-text-stroke:0.25px #000;">7,527,067.79</div>
<div class="t" style="left:892.27px;top:440.02px;font-size:8.72px;font-weight:normal;color:#000;transform:scaleX(0.8200);-webkit-text-stroke:0.25px #000;">18,490,485.12</div>
<div class="t" style="left:972.27px;top:440.02px;font-size:8.72px;font-weight:normal;color:#000;transform:scaleX(0.8200);-webkit-text-stroke:0.25px #000;">16,589,714.23</div>
<div class="t" style="left:1054.24px;top:440.02px;font-size:8.72px;font-weight:normal;color:#000;transform:scaleX(0.8200);-webkit-text-stroke:0.25px #000;">9,427,838.68</div>
<div class="t" style="left:185.30px;top:468.12px;font-size:8.72px;font-weight:normal;color:#000;transform:scaleX(0.7945);-webkit-text-stroke:0.25px #000;">11</div>
<div class="t" style="left:494.20px;top:468.12px;font-size:8.72px;font-weight:normal;color:#000;transform:scaleX(0.8450);-webkit-text-stroke:0.25px #000;">ACTIVO CIRCULANTE.</div>
<div class="t" style="left:816.74px;top:468.12px;font-size:8.72px;font-weight:normal;color:#000;transform:scaleX(0.8200);-webkit-text-stroke:0.25px #000;">7,527,067.79</div>
<div class="t" style="left:892.27px;top:468.12px;font-size:8.72px;font-weight:normal;color:#000;transform:scaleX(0.8200);-webkit-text-stroke:0.25px #000;">18,490,485.12</div>
<div class="t" style="left:972.27px;top:468.12px;font-size:8.72px;font-weight:normal;color:#000;transform:scaleX(0.8200);-webkit-text-stroke:0.25px #000;">16,589,714.23</div>
<div class="t" style="left:1054.24px;top:468.12px;font-size:8.72px;font-weight:normal;color:#000;transform:scaleX(0.8200);-webkit-text-stroke:0.25px #000;">9,427,838.68</div>
<div class="t" style="left:185.30px;top:496.22px;font-size:8.72px;font-weight:normal;color:#000;transform:scaleX(0.8292);-webkit-text-stroke:0.25px #000;">111</div>
<div class="t" style="left:494.20px;top:496.22px;font-size:8.72px;font-weight:normal;color:#000;transform:scaleX(0.8676);-webkit-text-stroke:0.25px #000;">EFECTIVO Y EQUIVALENTES DE EFECTIVO</div>
<div class="t" style="left:826.69px;top:496.22px;font-size:8.72px;font-weight:normal;color:#000;transform:scaleX(0.8200);-webkit-text-stroke:0.25px #000;">80,070.50</div>
<div class="t" style="left:896.24px;top:496.22px;font-size:8.72px;font-weight:normal;color:#000;transform:scaleX(0.8200);-webkit-text-stroke:0.25px #000;">8,084,346.00</div>
<div class="t" style="left:976.24px;top:496.22px;font-size:8.72px;font-weight:normal;color:#000;transform:scaleX(0.8200);-webkit-text-stroke:0.25px #000;">7,149,730.15</div>
<div class="t" style="left:1054.24px;top:496.22px;font-size:8.72px;font-weight:normal;color:#000;transform:scaleX(0.8200);-webkit-text-stroke:0.25px #000;">1,014,686.35</div>
<div class="t" style="left:185.30px;top:524.72px;font-size:8.72px;font-weight:normal;color:#000;transform:scaleX(0.8292);-webkit-text-stroke:0.25px #000;">111</div>
<div class="t" style="left:494.20px;top:524.72px;font-size:8.72px;font-weight:normal;color:#000;transform:scaleX(0.8676);-webkit-text-stroke:0.25px #000;">EFECTIVO Y EQUIVALENTES DE EFECTIVO</div>
<div class="t" style="left:826.69px;top:524.72px;font-size:8.72px;font-weight:normal;color:#000;transform:scaleX(0.8200);-webkit-text-stroke:0.25px #000;">80,070.50</div>
<div class="t" style="left:896.24px;top:524.72px;font-size:8.72px;font-weight:normal;color:#000;transform:scaleX(0.8200);-webkit-text-stroke:0.25px #000;">8,084,346.00</div>
<div class="t" style="left:976.24px;top:524.72px;font-size:8.72px;font-weight:normal;color:#000;transform:scaleX(0.8200);-webkit-text-stroke:0.25px #000;">7,149,730.15</div>
<div class="t" style="left:1054.24px;top:524.72px;font-size:8.72px;font-weight:normal;color:#000;transform:scaleX(0.8200);-webkit-text-stroke:0.25px #000;">1,014,686.35</div>
<div class="t" style="left:185.30px;top:553.02px;font-size:8.72px;font-weight:normal;color:#000;transform:scaleX(0.8292);-webkit-text-stroke:0.25px #000;">111</div>
<div class="t" style="left:494.20px;top:553.02px;font-size:8.72px;font-weight:normal;color:#000;transform:scaleX(0.8676);-webkit-text-stroke:0.25px #000;">EFECTIVO Y EQUIVALENTES DE EFECTIVO</div>
<div class="t" style="left:826.69px;top:553.02px;font-size:8.72px;font-weight:normal;color:#000;transform:scaleX(0.8200);-webkit-text-stroke:0.25px #000;">80,070.50</div>
<div class="t" style="left:896.24px;top:553.02px;font-size:8.72px;font-weight:normal;color:#000;transform:scaleX(0.8200);-webkit-text-stroke:0.25px #000;">8,084,346.00</div>
<div class="t" style="left:976.24px;top:553.02px;font-size:8.72px;font-weight:normal;color:#000;transform:scaleX(0.8200);-webkit-text-stroke:0.25px #000;">7,149,730.15</div>
<div class="t" style="left:1054.24px;top:553.02px;font-size:8.72px;font-weight:normal;color:#000;transform:scaleX(0.8200);-webkit-text-stroke:0.25px #000;">1,014,686.35</div>
<div class="t" style="left:185.30px;top:581.02px;font-size:8.72px;font-weight:normal;color:#000;transform:scaleX(0.8587);-webkit-text-stroke:0.25px #000;">1111</div>
<div class="t" style="left:494.20px;top:581.02px;font-size:8.72px;font-weight:normal;color:#000;transform:scaleX(0.8646);-webkit-text-stroke:0.25px #000;">EFECTIVO.</div>
<div class="t" style="left:844.57px;top:581.02px;font-size:8.72px;font-weight:normal;color:#000;transform:scaleX(0.8200);-webkit-text-stroke:0.25px #000;">0.00</div>
<div class="t" style="left:924.07px;top:581.02px;font-size:8.72px;font-weight:normal;color:#000;transform:scaleX(0.8200);-webkit-text-stroke:0.25px #000;">0.00</div>
<div class="t" style="left:1004.07px;top:581.02px;font-size:8.72px;font-weight:normal;color:#000;transform:scaleX(0.8200);-webkit-text-stroke:0.25px #000;">0.00</div>
<div class="t" style="left:1082.07px;top:581.02px;font-size:8.72px;font-weight:normal;color:#000;transform:scaleX(0.8200);-webkit-text-stroke:0.25px #000;">0.00</div>
<div class="t" style="left:185.30px;top:608.92px;font-size:8.72px;font-weight:normal;color:#000;transform:scaleX(0.8587);-webkit-text-stroke:0.25px #000;">1111</div>
<div class="t" style="left:494.20px;top:608.92px;font-size:8.72px;font-weight:normal;color:#000;transform:scaleX(0.8646);-webkit-text-stroke:0.25px #000;">EFECTIVO.</div>
<div class="t" style="left:844.57px;top:608.92px;font-size:8.72px;font-weight:normal;color:#000;transform:scaleX(0.8200);-webkit-text-stroke:0.25px #000;">0.00</div>
<div class="t" style="left:924.07px;top:608.92px;font-size:8.72px;font-weight:normal;color:#000;transform:scaleX(0.8200);-webkit-text-stroke:0.25px #000;">0.00</div>
<div class="t" style="left:1004.07px;top:608.92px;font-size:8.72px;font-weight:normal;color:#000;transform:scaleX(0.8200);-webkit-text-stroke:0.25px #000;">0.00</div>
<div class="t" style="left:1082.07px;top:608.92px;font-size:8.72px;font-weight:normal;color:#000;transform:scaleX(0.8200);-webkit-text-stroke:0.25px #000;">0.00</div>
<div class="t" style="left:185.30px;top:637.52px;font-size:8.72px;font-weight:normal;color:#000;transform:scaleX(0.8587);-webkit-text-stroke:0.25px #000;">1111</div>
<div class="t" style="left:494.20px;top:637.52px;font-size:8.72px;font-weight:normal;color:#000;transform:scaleX(0.8646);-webkit-text-stroke:0.25px #000;">EFECTIVO.</div>
<div class="t" style="left:844.57px;top:637.52px;font-size:8.72px;font-weight:normal;color:#000;transform:scaleX(0.8200);-webkit-text-stroke:0.25px #000;">0.00</div>
<div class="t" style="left:924.07px;top:637.52px;font-size:8.72px;font-weight:normal;color:#000;transform:scaleX(0.8200);-webkit-text-stroke:0.25px #000;">0.00</div>
<div class="t" style="left:1004.07px;top:637.52px;font-size:8.72px;font-weight:normal;color:#000;transform:scaleX(0.8200);-webkit-text-stroke:0.25px #000;">0.00</div>
<div class="t" style="left:1082.07px;top:637.52px;font-size:8.72px;font-weight:normal;color:#000;transform:scaleX(0.8200);-webkit-text-stroke:0.25px #000;">0.00</div>
<div class="t" style="left:185.30px;top:665.62px;font-size:8.72px;font-weight:normal;color:#000;transform:scaleX(0.8337);-webkit-text-stroke:0.25px #000;">1111-001</div>
<div class="t" style="left:494.20px;top:665.62px;font-size:8.72px;font-weight:normal;color:#000;transform:scaleX(0.8342);-webkit-text-stroke:0.25px #000;">CAJA</div>
<div class="t" style="left:844.57px;top:665.62px;font-size:8.72px;font-weight:normal;color:#000;transform:scaleX(0.8200);-webkit-text-stroke:0.25px #000;">0.00</div>
<div class="t" style="left:924.07px;top:665.62px;font-size:8.72px;font-weight:normal;color:#000;transform:scaleX(0.8200);-webkit-text-stroke:0.25px #000;">0.00</div>
<div class="t" style="left:1004.07px;top:665.62px;font-size:8.72px;font-weight:normal;color:#000;transform:scaleX(0.8200);-webkit-text-stroke:0.25px #000;">0.00</div>
<div class="t" style="left:1082.07px;top:665.62px;font-size:8.72px;font-weight:normal;color:#000;transform:scaleX(0.8200);-webkit-text-stroke:0.25px #000;">0.00</div>
<div class="a" style="left:1350px;top:101px;width:16px;height:587px;background:#f0f0f0;border-left:1px solid #e6e6e6"></div>
<div class="a" style="left:1350px;top:119px;width:15px;height:434px;border:1px solid #8e8e8e;border-radius:2px;background:linear-gradient(90deg,#f6f6f6,#e8e8e8 45%,#d8d8da 50%,#cdcdd1 90%,#e0e0e0)"></div>
<svg class="a" style="left:1350px;top:101px" width="16" height="587"><path d="M4.5 11 L8.5 6.8 L12.5 11Z" fill="#333"/><path d="M4.5 576 L8.5 580.2 L12.5 576Z" fill="#333"/><path d="M4 232.3 H11 M4 235.3 H11 M4 238.3 H11" stroke="#3a3a3a" stroke-width="1.4"/></svg>
<div class="a" style="left:0;top:688px;width:1350px;height:17px;background:#f0f0f0;border-top:1px solid #e6e6e6"></div>
<div class="a" style="left:1348px;top:688px;width:18px;height:17px;background:#f0f0f0"></div>
<div class="a" style="left:18px;top:689px;width:1299px;height:15px;border:1px solid #8e8e8e;border-radius:2px;background:linear-gradient(#f6f6f6,#e8e8e8 45%,#d8d8da 50%,#cdcdd1 90%,#e0e0e0)"></div>
<svg class="a" style="left:0;top:688px" width="1366" height="17"><path d="M11 4.5 L6.8 8.5 L11 12.5Z" fill="#333"/><path d="M1339 4.5 L1343.2 8.5 L1339 12.5Z" fill="#333"/><path d="M663.7 4.8 V12 M666.7 4.8 V12 M669.7 4.8 V12" stroke="#3a3a3a" stroke-width="1.4"/></svg>
<div class="a" style="left:0;top:705px;width:1366px;height:1px;background:#6a6a6a"></div>
<div class="a" style="left:0;top:706px;width:1366px;height:1px;background:#fff"></div>
<div class="a" style="left:8px;top:709px;width:1018px;height:16px;border-top:1px solid #a0a0a0;border-left:1px solid #a0a0a0;border-bottom:1px solid #fff;border-right:1px solid #fff"></div>
<div class="a" style="left:1034px;top:709px;width:158px;height:16px;border-top:1px solid #a0a0a0;border-left:1px solid #a0a0a0;border-bottom:1px solid #fff;border-right:1px solid #fff"></div>
<div class="a" style="left:1200px;top:709px;width:158px;height:16px;border-top:1px solid #a0a0a0;border-left:1px solid #a0a0a0;border-bottom:1px solid #fff;border-right:1px solid #fff"></div>
<div class="t" style="left:1036.90px;top:712.04px;font-size:12.35px;font-weight:normal;color:#000;transform:scaleX(0.9505);">Zoom: 91%</div>
<div class="t" style="left:1208.90px;top:711.34px;font-size:12.35px;font-weight:normal;color:#000;transform:scaleX(0.8935);">1153 pages, 35,814.7Kb</div>
<div class="a" style="left:0;top:727px;width:1366px;height:1px;background:#d8dde4"></div>
<div class="a" style="left:0;top:728px;width:1366px;height:40px;background:linear-gradient(90deg,#8093ab 0,#8297b0 60px,#a5bbd6 130px,#a8bed8 882px,#8294ab 916px,#8093aa 1366px)"></div>
<div class="a" style="left:0;top:728px;width:1366px;height:1px;background:#3a4556"></div>
<div class="a" style="left:0;top:729px;width:1366px;height:1px;background:rgba(225,235,245,.75)"></div>
<svg class="a" style="left:0;top:728px" width="1366" height="40"><defs><linearGradient id="orb2" x1="0" y1="0" x2="0" y2="1"><stop offset="0" stop-color="#c4d2de"/><stop offset=".42" stop-color="#6d8ca8"/><stop offset=".5" stop-color="#0e4c82"/><stop offset=".8" stop-color="#0a78c0"/><stop offset="1" stop-color="#10d8fa"/></linearGradient><linearGradient id="btn" x1="0" y1="0" x2="0" y2="1"><stop offset="0" stop-color="#e2eaf3"/><stop offset="1" stop-color="#cfdbe9"/></linearGradient><linearGradient id="btn2" x1="0" y1="0" x2="0" y2="1"><stop offset="0" stop-color="#bccde2"/><stop offset="1" stop-color="#a9bdd6"/></linearGradient></defs><circle cx="27" cy="20" r="17.6" fill="none" stroke="rgba(230,240,250,.55)" stroke-width="1"/><circle cx="27" cy="20" r="16.8" fill="url(#orb2)" stroke="#0d3f68" stroke-width="1"/><path d="M19.3 11.5 Q23.5 9.2 28.8 11 L27.3 18.3 Q22.8 16.6 18.2 18.6Z" fill="#f0501e"/><path d="M28.6 12.6 Q33.5 14.8 38.3 12.8 L36.3 20.8 Q31.5 22.4 27.4 20.3Z" fill="#8cc83c"/><path d="M17.6 19.6 Q21.6 17.5 26.6 19.2 L25 27 Q20.5 25.2 16 27Z" fill="#1a9ae8"/><path d="M26.8 21.4 Q31.3 23.4 35.6 21.3 L33.8 29.5 Q29.2 31.2 25.2 29.2Z" fill="#ffc21a"/><rect x="58" y="5" width="2" height="2" fill="#1e2530"/><rect x="58" y="5" width="1" height="1" fill="rgba(235,240,245,.85)"/><rect x="61" y="5" width="2" height="2" fill="#1e2530"/><rect x="61" y="5" width="1" height="1" fill="rgba(235,240,245,.85)"/><rect x="64" y="5" width="2" height="2" fill="#1e2530"/><rect x="64" y="5" width="1" height="1" fill="rgba(235,240,245,.85)"/><rect x="58" y="9" width="2" height="2" fill="#1e2530"/><rect x="58" y="9" width="1" height="1" fill="rgba(235,240,245,.85)"/><rect x="61" y="9" width="2" height="2" fill="#1e2530"/><rect x="61" y="9" width="1" height="1" fill="rgba(235,240,245,.85)"/><rect x="64" y="9" width="2" height="2" fill="#1e2530"/><rect x="64" y="9" width="1" height="1" fill="rgba(235,240,245,.85)"/><rect x="58" y="13" width="2" height="2" fill="#1e2530"/><rect x="58" y="13" width="1" height="1" fill="rgba(235,240,245,.85)"/><rect x="61" y="13" width="2" height="2" fill="#1e2530"/><rect x="61" y="13" width="1" height="1" fill="rgba(235,240,245,.85)"/><rect x="64" y="13" width="2" height="2" fill="#1e2530"/><rect x="64" y="13" width="1" height="1" fill="rgba(235,240,245,.85)"/><rect x="58" y="17" width="2" height="2" fill="#1e2530"/><rect x="58" y="17" width="1" height="1" fill="rgba(235,240,245,.85)"/><rect x="61" y="17" width="2" height="2" fill="#1e2530"/><rect x="61" y="17" width="1" height="1" fill="rgba(235,240,245,.85)"/><rect x="64" y="17" width="2" height="2" fill="#1e2530"/><rect x="64" y="17" width="1" height="1" fill="rgba(235,240,245,.85)"/><rect x="58" y="21" width="2" height="2" fill="#1e2530"/><rect x="58" y="21" width="1" height="1" fill="rgba(235,240,245,.85)"/><rect x="61" y="21" width="2" height="2" fill="#1e2530"/><rect x="61" y="21" width="1" height="1" fill="rgba(235,240,245,.85)"/><rect x="64" y="21" width="2" height="2" fill="#1e2530"/><rect x="64" y="21" width="1" height="1" fill="rgba(235,240,245,.85)"/><rect x="58" y="25" width="2" height="2" fill="#1e2530"/><rect x="58" y="25" width="1" height="1" fill="rgba(235,240,245,.85)"/><rect x="61" y="25" width="2" height="2" fill="#1e2530"/><rect x="61" y="25" width="1" height="1" fill="rgba(235,240,245,.85)"/><rect x="64" y="25" width="2" height="2" fill="#1e2530"/><rect x="64" y="25" width="1" height="1" fill="rgba(235,240,245,.85)"/><rect x="58" y="29" width="2" height="2" fill="#1e2530"/><rect x="58" y="29" width="1" height="1" fill="rgba(235,240,245,.85)"/><rect x="61" y="29" width="2" height="2" fill="#1e2530"/><rect x="61" y="29" width="1" height="1" fill="rgba(235,240,245,.85)"/><rect x="64" y="29" width="2" height="2" fill="#1e2530"/><rect x="64" y="29" width="1" height="1" fill="rgba(235,240,245,.85)"/><rect x="58" y="33" width="2" height="2" fill="#1e2530"/><rect x="58" y="33" width="1" height="1" fill="rgba(235,240,245,.85)"/><rect x="61" y="33" width="2" height="2" fill="#1e2530"/><rect x="61" y="33" width="1" height="1" fill="rgba(235,240,245,.85)"/><rect x="64" y="33" width="2" height="2" fill="#1e2530"/><rect x="64" y="33" width="1" height="1" fill="rgba(235,240,245,.85)"/><circle cx="106" cy="19.8" r="10.9" fill="none" stroke="#34ace6" stroke-width="5.2"/><circle cx="106" cy="19.8" r="9" fill="none" stroke="#7fd0f6" stroke-width="1"/><rect x="96.5" y="18.6" width="21" height="4.4" fill="#34ace6"/><path d="M109 23.3 L121 23.3 L121 28.2 L109 26.3Z" fill="#a6bcd6"/><path d="M91 33.5 C86 27 98 12 110 6.5 C118 3 122 4 118.5 11" fill="none" stroke="#f4b800" stroke-width="2.6"/><rect x="138.5" y="1.5" width="57" height="37" rx="3" fill="url(#btn)" stroke="#5a6d86" stroke-width="1"/><rect x="139.5" y="2.5" width="55" height="35" rx="2" fill="none" stroke="rgba(255,255,255,.55)" stroke-width="1"/><rect x="200.5" y="1.5" width="57" height="37" rx="3" fill="url(#btn2)" stroke="#5a6d86" stroke-width="1"/><rect x="201.5" y="2.5" width="55" height="35" rx="2" fill="none" stroke="rgba(255,255,255,.55)" stroke-width="1"/><rect x="324.5" y="1.5" width="52" height="37" rx="3" fill="url(#btn2)" stroke="#5a6d86" stroke-width="1"/><rect x="325.5" y="2.5" width="50" height="35" rx="2" fill="none" stroke="rgba(255,255,255,.55)" stroke-width="1"/><rect x="386.5" y="1.5" width="57" height="37" rx="3" fill="url(#btn2)" stroke="#5a6d86" stroke-width="1"/><rect x="387.5" y="2.5" width="55" height="35" rx="2" fill="none" stroke="rgba(255,255,255,.55)" stroke-width="1"/><rect x="448.5" y="1.5" width="57" height="37" rx="3" fill="url(#btn2)" stroke="#5a6d86" stroke-width="1"/><rect x="449.5" y="2.5" width="55" height="35" rx="2" fill="none" stroke="rgba(255,255,255,.55)" stroke-width="1"/><rect x="380" y="2" width="2" height="36" fill="#7d8fa6"/><path d="M151.5 33.5 V9 Q151.5 7 153.5 7 H163 L164.5 9 H175 L176.5 10.5 H181.5 Q182.5 10.5 182.5 12 V33.5Z" fill="#ecd080" stroke="#c9a04c" stroke-width="0.9"/><rect x="153" y="8.3" width="10" height="2.4" fill="#fff"/><rect x="153.5" y="8.5" width="2.5" height="2" fill="#1aa01a"/><rect x="163" y="10" width="10" height="2.4" fill="#fff"/><rect x="163.5" y="10.2" width="2.5" height="2" fill="#d02020"/><rect x="171" y="12" width="9" height="2.4" fill="#fff"/><rect x="171.5" y="12.2" width="2.5" height="2" fill="#2a8ae0"/><path d="M152 33.2 V15.5 Q152 14 153.5 14 H181 Q182 14 182 15.5 V33.2Z" fill="#f7e6a2"/><path d="M155.5 36 V26.5 Q155.5 23.5 158.5 23.5 H176 Q179 23.5 179 26.5 V36 H173.5 V30 H161 V36Z" fill="#86ccf0" stroke="#3c90c8" stroke-width="0.9"/><path d="M213.5 30.5 V10 Q213.5 4 219.5 4 H239.5 V30.5Z" fill="#f4f7fc" stroke="#3a66c4" stroke-width="1.1"/><path d="M215.5 29 V11 Q216 6.5 221 6.5 H223 L220 29Z" fill="#2a55b5"/><path d="M223 7.5 L244 9 L242.5 34 L219.5 31Z" fill="#f8fafc" stroke="#c9d3e0" stroke-width="0.6"/><path d="M224.5 12 L226.5 20 L229 14 L231.5 20 L234.5 12" fill="none" stroke="#2848a8" stroke-width="2"/><path d="M235.5 12.8 H240 M235.3 16.5 H240 M235 20 H239.8 M224 22.5 H239.5 M223.5 26 H239" stroke="#1f3f9f" stroke-width="1.6"/><circle cx="291" cy="18.5" r="13.2" fill="#fff"/><path d="M279 33.5 L281.5 25 L287.5 30Z" fill="#fff"/><circle cx="291" cy="18.5" r="11.2" fill="#40c351"/><path d="M285.8 12.8 Q286.5 11.6 288.2 11.8 L290 15.2 L288.6 16.8 Q290 20.5 293.5 21.8 L295 20.3 L298.2 22.1 Q298.2 24.2 296.4 24.8 Q291.2 25.4 287 20.7 Q284.6 16.4 285.8 12.8Z" fill="#fff"/><circle cx="350" cy="19" r="14.5" fill="#db4437"/><path d="M350 19 L362.56 11.75 A14.5 14.5 0 0 1 350 33.5Z" fill="#f4c20d"/><path d="M350 19 L350 33.5 A14.5 14.5 0 0 1 337.44 11.75Z" fill="#0f9d58"/><circle cx="350" cy="19" r="6.6" fill="#fff"/><circle cx="350" cy="19" r="5.2" fill="#4285f4"/><path d="M399 31 V10 Q399 4 405 4 H425.5 V31Z" fill="#f2f6ee" stroke="#3aa52e" stroke-width="1.1"/><path d="M401 29 V11 Q401.5 6.5 406 6.5 H423.5 V10 H404 L402 29Z" fill="#c8d8c0"/><path d="M404 10 L430 12 L428.6 34 L402 30.5Z" fill="#f6f9f0" stroke="#c8d4c0" stroke-width="0.6"/><path d="M406 12.5 L418 21.5 M417 12.5 L407 21" stroke="#2f7d2a" stroke-width="3"/><path d="M421 14 H427.5 V17.5 H421Z M420.5 19 H427 V23 H420.5Z M404.5 24 H410 V28.5 H404.5Z M412 24.5 H418 V29 H412Z M420 25 H426.5 V29.5 H420Z" fill="#4e9a48"/><rect x="463" y="6" width="27" height="27" fill="#fdfdfd"/><ellipse cx="476.5" cy="19.5" rx="12" ry="5" fill="none" stroke="#777" stroke-width="0.6"/><ellipse cx="476.5" cy="19.5" rx="12" ry="5" fill="none" stroke="#777" stroke-width="0.6" transform="rotate(60 476.5 19.5)"/><ellipse cx="476.5" cy="19.5" rx="12" ry="5" fill="none" stroke="#777" stroke-width="0.6" transform="rotate(-60 476.5 19.5)"/><circle cx="466" cy="15" r="1.3" fill="#2a2"/><circle cx="487" cy="14" r="1.3" fill="#d22"/><circle cx="468" cy="26" r="1.3" fill="#22c"/><circle cx="485" cy="25" r="1.3" fill="#e80"/><circle cx="476.5" cy="10" r="1.1" fill="#fc0"/><path d="M470 8 H483 M471 31 H482" stroke="#999" stroke-width="0.8"/><rect x="925" y="5" width="2" height="2" fill="#1e2530"/><rect x="925" y="5" width="1" height="1" fill="rgba(235,240,245,.85)"/><rect x="928" y="5" width="2" height="2" fill="#1e2530"/><rect x="928" y="5" width="1" height="1" fill="rgba(235,240,245,.85)"/><rect x="931" y="5" width="2" height="2" fill="#1e2530"/><rect x="931" y="5" width="1" height="1" fill="rgba(235,240,245,.85)"/><rect x="925" y="9" width="2" height="2" fill="#1e2530"/><rect x="925" y="9" width="1" height="1" fill="rgba(235,240,245,.85)"/><rect x="928" y="9" width="2" height="2" fill="#1e2530"/><rect x="928" y="9" width="1" height="1" fill="rgba(235,240,245,.85)"/><rect x="931" y="9" width="2" height="2" fill="#1e2530"/><rect x="931" y="9" width="1" height="1" fill="rgba(235,240,245,.85)"/><rect x="925" y="13" width="2" height="2" fill="#1e2530"/><rect x="925" y="13" width="1" height="1" fill="rgba(235,240,245,.85)"/><rect x="928" y="13" width="2" height="2" fill="#1e2530"/><rect x="928" y="13" width="1" height="1" fill="rgba(235,240,245,.85)"/><rect x="931" y="13" width="2" height="2" fill="#1e2530"/><rect x="931" y="13" width="1" height="1" fill="rgba(235,240,245,.85)"/><rect x="925" y="17" width="2" height="2" fill="#1e2530"/><rect x="925" y="17" width="1" height="1" fill="rgba(235,240,245,.85)"/><rect x="928" y="17" width="2" height="2" fill="#1e2530"/><rect x="928" y="17" width="1" height="1" fill="rgba(235,240,245,.85)"/><rect x="931" y="17" width="2" height="2" fill="#1e2530"/><rect x="931" y="17" width="1" height="1" fill="rgba(235,240,245,.85)"/><rect x="925" y="21" width="2" height="2" fill="#1e2530"/><rect x="925" y="21" width="1" height="1" fill="rgba(235,240,245,.85)"/><rect x="928" y="21" width="2" height="2" fill="#1e2530"/><rect x="928" y="21" width="1" height="1" fill="rgba(235,240,245,.85)"/><rect x="931" y="21" width="2" height="2" fill="#1e2530"/><rect x="931" y="21" width="1" height="1" fill="rgba(235,240,245,.85)"/><rect x="925" y="25" width="2" height="2" fill="#1e2530"/><rect x="925" y="25" width="1" height="1" fill="rgba(235,240,245,.85)"/><rect x="928" y="25" width="2" height="2" fill="#1e2530"/><rect x="928" y="25" width="1" height="1" fill="rgba(235,240,245,.85)"/><rect x="931" y="25" width="2" height="2" fill="#1e2530"/><rect x="931" y="25" width="1" height="1" fill="rgba(235,240,245,.85)"/><rect x="925" y="29" width="2" height="2" fill="#1e2530"/><rect x="925" y="29" width="1" height="1" fill="rgba(235,240,245,.85)"/><rect x="928" y="29" width="2" height="2" fill="#1e2530"/><rect x="928" y="29" width="1" height="1" fill="rgba(235,240,245,.85)"/><rect x="931" y="29" width="2" height="2" fill="#1e2530"/><rect x="931" y="29" width="1" height="1" fill="rgba(235,240,245,.85)"/><rect x="925" y="33" width="2" height="2" fill="#1e2530"/><rect x="925" y="33" width="1" height="1" fill="rgba(235,240,245,.85)"/><rect x="928" y="33" width="2" height="2" fill="#1e2530"/><rect x="928" y="33" width="1" height="1" fill="rgba(235,240,245,.85)"/><rect x="931" y="33" width="2" height="2" fill="#1e2530"/><rect x="931" y="33" width="1" height="1" fill="rgba(235,240,245,.85)"/><rect x="1107" y="5" width="2" height="2" fill="#1e2530"/><rect x="1107" y="5" width="1" height="1" fill="rgba(235,240,245,.85)"/><rect x="1110" y="5" width="2" height="2" fill="#1e2530"/><rect x="1110" y="5" width="1" height="1" fill="rgba(235,240,245,.85)"/><rect x="1113" y="5" width="2" height="2" fill="#1e2530"/><rect x="1113" y="5" width="1" height="1" fill="rgba(235,240,245,.85)"/><rect x="1107" y="9" width="2" height="2" fill="#1e2530"/><rect x="1107" y="9" width="1" height="1" fill="rgba(235,240,245,.85)"/><rect x="1110" y="9" width="2" height="2" fill="#1e2530"/><rect x="1110" y="9" width="1" height="1" fill="rgba(235,240,245,.85)"/><rect x="1113" y="9" width="2" height="2" fill="#1e2530"/><rect x="1113" y="9" width="1" height="1" fill="rgba(235,240,245,.85)"/><rect x="1107" y="13" width="2" height="2" fill="#1e2530"/><rect x="1107" y="13" width="1" height="1" fill="rgba(235,240,245,.85)"/><rect x="1110" y="13" width="2" height="2" fill="#1e2530"/><rect x="1110" y="13" width="1" height="1" fill="rgba(235,240,245,.85)"/><rect x="1113" y="13" width="2" height="2" fill="#1e2530"/><rect x="1113" y="13" width="1" height="1" fill="rgba(235,240,245,.85)"/><rect x="1107" y="17" width="2" height="2" fill="#1e2530"/><rect x="1107" y="17" width="1" height="1" fill="rgba(235,240,245,.85)"/><rect x="1110" y="17" width="2" height="2" fill="#1e2530"/><rect x="1110" y="17" width="1" height="1" fill="rgba(235,240,245,.85)"/><rect x="1113" y="17" width="2" height="2" fill="#1e2530"/><rect x="1113" y="17" width="1" height="1" fill="rgba(235,240,245,.85)"/><rect x="1107" y="21" width="2" height="2" fill="#1e2530"/><rect x="1107" y="21" width="1" height="1" fill="rgba(235,240,245,.85)"/><rect x="1110" y="21" width="2" height="2" fill="#1e2530"/><rect x="1110" y="21" width="1" height="1" fill="rgba(235,240,245,.85)"/><rect x="1113" y="21" width="2" height="2" fill="#1e2530"/><rect x="1113" y="21" width="1" height="1" fill="rgba(235,240,245,.85)"/><rect x="1107" y="25" width="2" height="2" fill="#1e2530"/><rect x="1107" y="25" width="1" height="1" fill="rgba(235,240,245,.85)"/><rect x="1110" y="25" width="2" height="2" fill="#1e2530"/><rect x="1110" y="25" width="1" height="1" fill="rgba(235,240,245,.85)"/><rect x="1113" y="25" width="2" height="2" fill="#1e2530"/><rect x="1113" y="25" width="1" height="1" fill="rgba(235,240,245,.85)"/><rect x="1107" y="29" width="2" height="2" fill="#1e2530"/><rect x="1107" y="29" width="1" height="1" fill="rgba(235,240,245,.85)"/><rect x="1110" y="29" width="2" height="2" fill="#1e2530"/><rect x="1110" y="29" width="1" height="1" fill="rgba(235,240,245,.85)"/><rect x="1113" y="29" width="2" height="2" fill="#1e2530"/><rect x="1113" y="29" width="1" height="1" fill="rgba(235,240,245,.85)"/><rect x="1107" y="33" width="2" height="2" fill="#1e2530"/><rect x="1107" y="33" width="1" height="1" fill="rgba(235,240,245,.85)"/><rect x="1110" y="33" width="2" height="2" fill="#1e2530"/><rect x="1110" y="33" width="1" height="1" fill="rgba(235,240,245,.85)"/><rect x="1113" y="33" width="2" height="2" fill="#1e2530"/><rect x="1113" y="33" width="1" height="1" fill="rgba(235,240,245,.85)"/><path d="M995 10 H1001 L1002.5 11.5 H1011 V22.5 H995Z" fill="#e6c25f"/><path d="M995 14 H1011 V22.5 H995Z" fill="#f3d88a"/><path d="M998 17 H1008 V23 H1006 V19.5 H1000 V23 H998Z" fill="#3aa0e0"/><path d="M1090 7.5 L1093 10 L1090 12.5 M1094 7.5 L1097 10 L1094 12.5" fill="none" stroke="#fff" stroke-width="1.3"/><path d="M1155 23.3 L1159.5 19.3 L1164 23.3Z" fill="#f4f6f8" stroke="#4a5566" stroke-width="0.6"/><rect x="1178.5" y="13.5" width="6" height="3" fill="#ccc" stroke="#666" stroke-width="0.6"/><path d="M1177 17 H1186 V24 L1183.5 28 H1179.5 L1177 24Z" fill="#6d6d6d" stroke="#333" stroke-width="0.6"/><rect x="1180.5" y="28" width="2" height="2" fill="#555"/><circle cx="1188" cy="24" r="5" fill="#1f9a2a" stroke="#0d5f16" stroke-width="0.6"/><path d="M1185.5 24 L1187.5 26 L1190.8 21.5" fill="none" stroke="#fff" stroke-width="1.4"/><rect x="1205.5" y="17.5" width="10" height="8" fill="#3a4c60" stroke="#e8ecf0" stroke-width="1.4"/><path d="M1208 28.5 H1214 M1211 26 V28.5" stroke="#e8ecf0" stroke-width="1.4"/><path d="M1201.5 14 V28 M1201.5 20 H1205 M1200 14 H1203.5 V19 H1200Z" stroke="#e8ecf0" stroke-width="1.2" fill="none"/><path d="M1227 17 H1230 L1234 13 V27 L1230 23 H1227Z" fill="#f2f4f6" stroke="#56606e" stroke-width="0.7"/><path d="M1236.5 16.5 Q1238.5 20 1236.5 23.5" fill="none" stroke="#f2f4f6" stroke-width="1"/><path d="M1248.5 13 V29" stroke="#f2f4f6" stroke-width="1.6"/><path d="M1249.5 14 Q1253 12.5 1257 14.5 T1264 14 V22 Q1260 23.5 1257 22 T1249.5 22Z" fill="#f2f4f6" stroke="#6a7482" stroke-width="0.6"/><circle cx="1259" cy="25" r="4.6" fill="#d8232a" stroke="#fff" stroke-width="0.8"/><path d="M1257 23 L1261 27 M1261 23 L1257 27" stroke="#fff" stroke-width="1.3"/><rect x="1352" y="1" width="14" height="39" fill="#6f8096"/><rect x="1352.5" y="1.5" width="13" height="38" fill="none" stroke="#9fb0c4" stroke-width="1"/><rect x="1353.5" y="2.5" width="11" height="36" fill="#5d6c80"/></svg>
<div class="t" style="left:939.30px;top:741.82px;font-size:12.50px;font-weight:normal;color:#dfe4ea;transform:scaleX(0.9349);">Escritorio</div>
<div class="t" style="left:1015.80px;top:736.47px;font-size:12.79px;font-weight:normal;color:#f4f6f8;transform:scaleX(0.9124);">Bibliotecas</div>
<div class="t" style="left:1125.30px;top:739.77px;font-size:12.79px;font-weight:normal;color:#f4f6f8;transform:scaleX(0.8029);">ES</div>
<div class="t" style="left:1284.90px;top:735.17px;font-size:12.79px;font-weight:normal;color:#f4f6f8;transform:scaleX(0.8840);">10:17 a.m.</div>
<div class="t" style="left:1281.60px;top:750.92px;font-size:13.08px;font-weight:normal;color:#f4f6f8;transform:scaleX(0.8966);">08/02/2019</div>
</body></html>
